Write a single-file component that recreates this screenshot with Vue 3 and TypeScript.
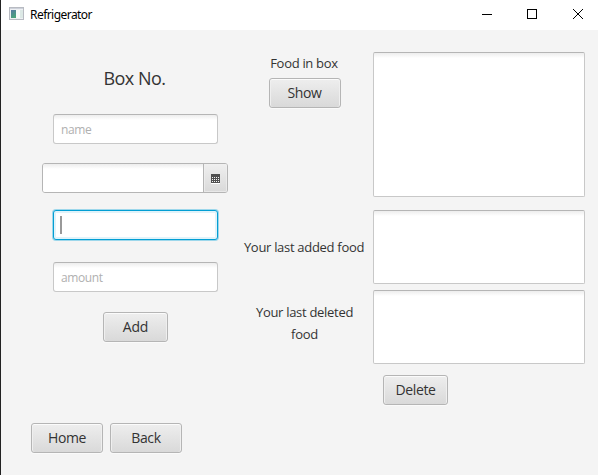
<script setup lang="ts">
import { ref } from 'vue'

const name = ref('')
const date = ref('')
const amount = ref('')
</script>

<template>
  <div class="window">
    <header class="titlebar">
      <svg class="app-icon" width="15" height="14" viewBox="0 0 15 14">
        <defs>
          <linearGradient id="pane" x1="0" y1="0" x2="0.4" y2="1">
            <stop offset="0" stop-color="#5778a4" />
            <stop offset="1" stop-color="#49a37b" />
          </linearGradient>
        </defs>
        <rect x="0.5" y="0.5" width="14" height="12" fill="#eef0f3" stroke="#b8bbc2" />
        <rect x="1" y="1" width="13" height="1" fill="#cdd1da" />
        <rect x="2" y="3" width="5" height="8" fill="url(#pane)" />
        <rect x="7" y="3" width="4" height="8" fill="#f8fafa" />
        <rect x="11" y="3" width="3" height="8" fill="#dce8e5" />
      </svg>
      <span class="title">Refrigerator</span>
      <div class="controls">
        <svg width="10" height="10" viewBox="0 0 10 10"><path d="M0 5.5H10" /></svg>
        <svg width="10" height="10" viewBox="0 0 10 10"><rect x="0.5" y="0.5" width="9" height="9" /></svg>
        <svg class="close" width="10" height="10" viewBox="0 0 10 10"><path d="M0 0L10 10M10 0L0 10" /></svg>
      </div>
    </header>

    <main class="content">
      <section class="form">
        <h1>Box No.</h1>
        <input v-model="name" class="field name" placeholder="name" />
        <div class="date">
          <input v-model="date" class="date-input" />
          <button class="date-button" aria-label="Calendar">
            <svg width="9" height="10" viewBox="0 0 9 10">
              <rect width="9" height="9" fill="#505050" />
              <rect y="9" width="9" height="1" fill="#fff" />
              <path
                d="M1 3.5H8M1 5.5H8M1 7.5H8"
                stroke="#f4f4f4"
                stroke-width="1"
                stroke-dasharray="1 1"
              />
            </svg>
          </button>
        </div>
        <div class="field focused"><span class="caret"></span></div>
        <input v-model="amount" class="field amount" placeholder="amount" />
        <button class="btn add">Add</button>
        <nav class="nav">
          <button class="btn wide">Home</button>
          <button class="btn wide">Back</button>
        </nav>
      </section>

      <section class="labels">
        <div class="label l-food">Food in box</div>
        <button class="btn wide">Show</button>
        <div class="label l-added">Your last added food</div>
        <div class="label l-deleted">Your last deleted<br />food</div>
      </section>

      <section class="lists">
        <div class="list big"></div>
        <div class="list added"></div>
        <div class="list removed"></div>
        <button class="btn delete">Delete</button>
      </section>
    </main>
  </div>
</template>

<style>
body {
  margin: 0;
  overflow: hidden;
}
</style>

<style scoped>
* {
  box-sizing: border-box;
}
.window {
  width: 598px;
  height: 475px;
  border-left: 1px solid #222;
  background: #f4f4f4;
  font-family: 'Open Sans', 'Noto Sans', sans-serif;
  color: #333;
}
.titlebar {
  display: flex;
  align-items: center;
  height: 30px;
  padding: 0 15px 0 8px;
  background: #fff;
}
.app-icon {
  display: block;
  margin-top: -2px;
}
.title {
  margin-left: 6px;
  font-family: 'Noto Sans', sans-serif;
  font-size: 12px;
  line-height: 30px;
  letter-spacing: -0.55px;
  color: #000;
}
.controls {
  display: flex;
  gap: 35px;
  margin-left: auto;
  margin-top: -2px;
}
.controls svg {
  display: block;
  fill: none;
  stroke: #000;
  stroke-width: 1;
}
.controls .close {
  margin-left: 1px;
}
.content {
  display: grid;
  grid-template-columns: 209px 129px 212px;
  padding-left: 30px;
}
.lists {
  margin-left: 4px;
  width: 212px;
  padding-top: 22px;
}
.form,
.labels {
  display: flex;
  flex-direction: column;
  align-items: center;
}
h1 {
  margin: 35px 0 0;
  padding-right: 2px;
  height: 27px;
  font-size: 18px;
  font-weight: 400;
  line-height: 26px;
  letter-spacing: -0.5px;
}
.field {
  width: 165px;
  height: 30px;
  padding: 1px 7px 0;
  border: 1px solid #c8c8c8;
  border-top-color: #b5b5b5;
  border-radius: 3px;
  background: linear-gradient(#ededed, #fff 5px);
  font-family: 'Open Sans', 'Noto Sans', sans-serif;
  font-size: 12px;
  letter-spacing: -0.4px;
  outline: none;
}
.field::placeholder {
  color: #b0b0b0;
  opacity: 1;
}
.name {
  margin-top: 22px;
}
.date {
  display: flex;
  align-self: flex-start;
  width: 186px;
  height: 30px;
  margin-top: 19px;
  margin-left: 11px;
  border: 1px solid #b5b5b5;
  border-radius: 3px;
  overflow: hidden;
}
.date-input {
  flex: 1;
  min-width: 0;
  border: 0;
  outline: none;
  background: linear-gradient(#ededed, #fff 5px);
}
.date-button {
  display: flex;
  align-items: center;
  justify-content: center;
  width: 24px;
  padding: 2px 0 0;
  border: 0;
  border-left: 1px solid #b5b5b5;
  background: linear-gradient(#efefef, #d9d9d9);
  box-shadow: inset 0 0 0 1px #f0f0f0aa;
}
.focused {
  display: flex;
  align-items: center;
  margin-top: 17px;
  padding: 0 6px;
  border-color: #039ed3;
  background: #fff;
  box-shadow: 0 0 0 1px #9dd7eb, inset 0 0 0 2px #e0f3fa;
}
.caret {
  width: 2px;
  height: 18px;
  background: #999;
}
.amount {
  margin-top: 22px;
}
.btn {
  display: flex;
  align-items: center;
  justify-content: center;
  width: 65px;
  height: 30px;
  padding: 0;
  border: 1px solid #b5b5b5;
  border-radius: 3px;
  background: linear-gradient(#eee, #d9d9d9);
  box-shadow: inset 0 1px #fbfbfb, inset 1px 0 #efefef, inset -1px 0 #efefef, 0 1px #fafafa;
  font-family: 'Open Sans', 'Noto Sans', sans-serif;
  font-size: 14px;
  line-height: 28px;
  letter-spacing: -0.4px;
  color: #333;
}
.wide {
  width: 72px;
}
.add {
  margin-top: 20px;
  letter-spacing: -0.2px;
}
.nav {
  display: flex;
  gap: 7px;
  align-self: flex-start;
  margin-top: 81px;
}
.label {
  font-size: 13px;
  line-height: 22px;
  letter-spacing: -0.3px;
  text-align: center;
  white-space: nowrap;
}
.l-food {
  margin-top: 22px;
  padding-right: 1px;
  height: 26px;
}
.l-added {
  margin-top: 128px;
  padding-right: 1px;
}
.l-deleted {
  margin-top: 43px;
}
.list {
  border: 1px solid #c8c8c8;
  border-top-color: #b5b5b5;
  border-radius: 2px;
  background: linear-gradient(#ededed, #fff 5px);
}
.big {
  height: 145px;
}
.added {
  height: 74px;
  margin-top: 13px;
}
.removed {
  height: 74px;
  margin-top: 6px;
}
.delete {
  margin: 11px 0 0 10px;
}
</style>
